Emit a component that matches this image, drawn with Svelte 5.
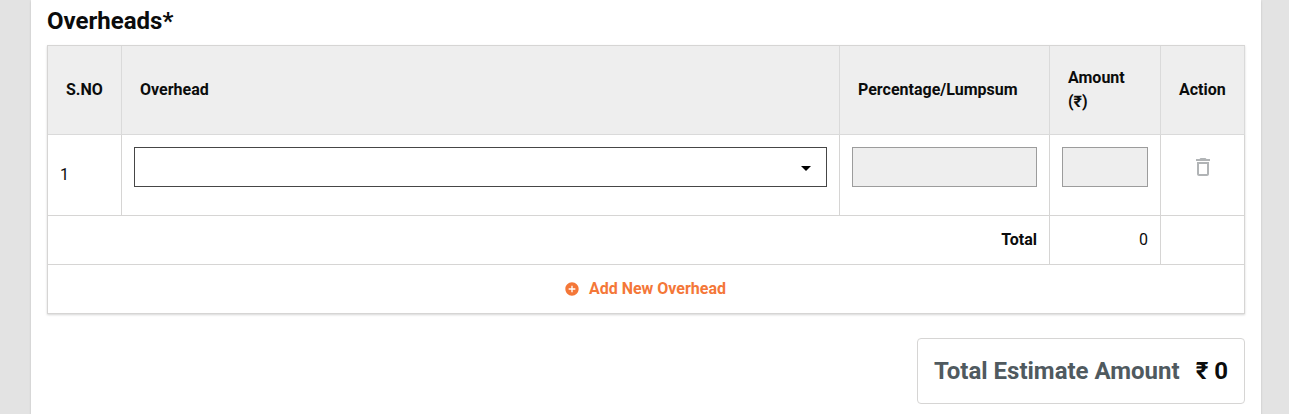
<script>
  const rows = [{ id: 1 }];
  const total = 0;
</script>

<main class="page">
  <section class="card">
    <h2>Overheads*</h2>
    <table>
      <colgroup>
        <col class="c-no" /><col class="c-name" /><col class="c-pct" /><col class="c-amt" /><col class="c-act" />
      </colgroup>
      <thead>
        <tr>
          <th>S.NO</th>
          <th>Overhead</th>
          <th>Percentage/Lumpsum</th>
          <th>Amount (₹)</th>
          <th>Action</th>
        </tr>
      </thead>
      <tbody>
        {#each rows as row (row.id)}
          <tr class="entry">
            <td class="no">{row.id}</td>
            <td class="field">
              <div class="select">
                <svg width="24" height="24" viewBox="0 0 24 24"><path d="M7 10l5 5 5-5z" /></svg>
              </div>
            </td>
            <td class="field"><div class="input"></div></td>
            <td class="field"><div class="input"></div></td>
            <td class="field">
              <div class="remove">
                <svg width="24" height="24" viewBox="0 0 24 24" fill="#b1b4b6">
                  <path d="M16 9v10H8V9h8m-1.500-6h-5l-1 1H5v2h14V4h-3.500l-1-1zM18 7H6v12c0 1.100.9 2 2 2h8c1.100 0 2-.9 2-2V7z" />
                </svg>
              </div>
            </td>
          </tr>
        {/each}
        <tr class="line">
          <td class="end strong" colspan="3">Total</td>
          <td class="end">{total}</td>
          <td></td>
        </tr>
        <tr class="line">
          <td colspan="5">
            <div class="add">
              <svg width="16" height="16" viewBox="0 0 24 24" fill="#f47738">
                <path d="M12 2C6.480 2 2 6.480 2 12s4.480 10 10 10 10-4.480 10-10S17.520 2 12 2zm5 11h-4v4h-2v-4H7v-2h4V7h2v4h4v2z" />
              </svg>
              <span>Add New Overhead</span>
            </div>
          </td>
        </tr>
      </tbody>
    </table>
    <div class="summary">
      <span class="label">Total Estimate Amount</span>
      <span>₹ {total}</span>
    </div>
  </section>
</main>

<style>
  :global(body) {
    margin: 0;
    overflow: hidden;
  }
  .page {
    box-sizing: border-box;
    height: 414px;
    padding: 0 28px 0 31px;
    background: #e3e3e3;
    font-family: Roboto, sans-serif;
    font-size: 16px;
    line-height: 24px;
    color: #0b0c0c;
    overflow: hidden;
  }
  .card {
    box-sizing: border-box;
    height: 430px;
    padding: 7px 16px 0;
    background: #fff;
    box-shadow: 0 1px 2px rgba(0, 0, 0, 0.16);
    display: flex;
    flex-direction: column;
  }
  h2 {
    margin: 0 0 10px;
    font-size: 24px;
    line-height: 28px;
    font-weight: 700;
  }
  table {
    width: 1198px;
    table-layout: fixed;
    border-collapse: separate;
    border-spacing: 0;
    border: 0 solid #d6d5d4;
    border-width: 1px 0 0 1px;
    box-shadow: 0 1px 2px rgba(0, 0, 0, 0.16);
  }
  .c-no { width: 74px; }
  .c-name { width: 718px; }
  .c-pct { width: 210px; }
  .c-amt { width: 111px; }
  .c-act { width: 84px; }
  th, td {
    box-sizing: border-box;
    border: 0 solid #d6d5d4;
    border-width: 0 1px 1px 0;
    padding: 0 12px;
  }
  th {
    height: 89px;
    padding: 0 18px;
    background: #eee;
    border-color: #dadada;
    text-align: left;
    font-weight: 700;
  }
  .entry td { height: 81px; }
  .line td { height: 49px; }
  .entry .field {
    padding-top: 12px;
    vertical-align: top;
  }
  .end { text-align: right; }
  .strong { font-weight: 700; }
  .select, .input {
    box-sizing: border-box;
    height: 40px;
    border: 1px solid #464646;
  }
  .select {
    display: flex;
    align-items: center;
    justify-content: flex-end;
    padding: 2px 8px 0 0;
  }
  .input {
    border-color: #9c9c9c;
    background: #eee;
  }
  .remove {
    display: flex;
    height: 40px;
    padding-left: 1px;
    align-items: center;
    justify-content: center;
  }
  .add {
    display: flex;
    align-items: center;
    justify-content: center;
    gap: 9px;
    padding-right: 2px;
    color: #f47738;
    font-weight: 700;
  }
  .summary {
    box-sizing: border-box;
    align-self: flex-end;
    display: flex;
    align-items: center;
    gap: 16px;
    height: 66px;
    margin-top: 24px;
    padding: 0 16px;
    border: 1px solid #d6d5d4;
    border-radius: 4px;
    font-size: 24px;
    line-height: 28px;
    font-weight: 700;
  }
  .label { color: #505a5f; }
</style>
